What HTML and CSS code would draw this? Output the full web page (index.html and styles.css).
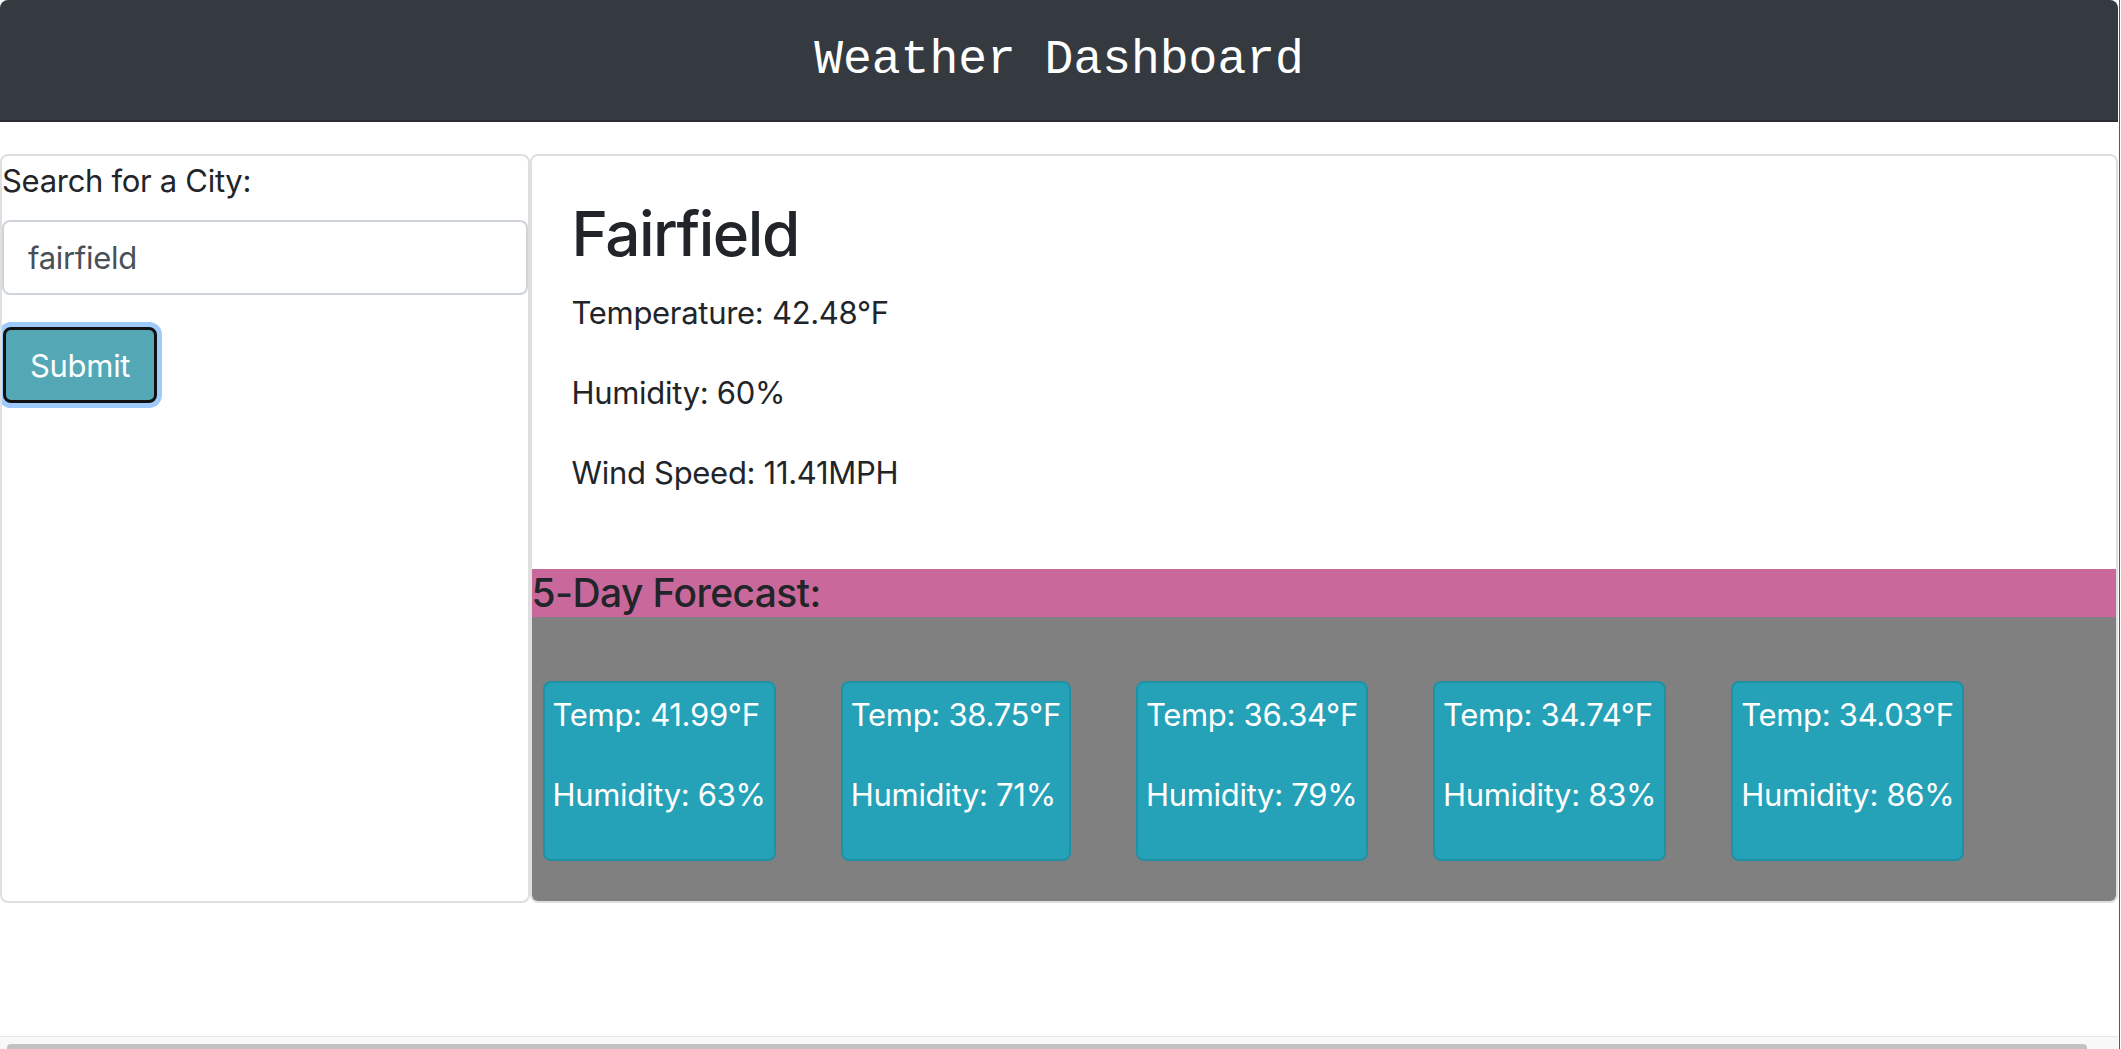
FILE: index.html
```html
<!DOCTYPE html>
<html lang="en">
<head>
<meta charset="utf-8">
<title>Weather Dashboard</title>
<link rel="stylesheet" href="styles.css">
</head>
<body>
<div class="window">
  <div class="viewport">
    <div class="page">
      <header class="topbar">
        <h1 class="title">Weather Dashboard</h1>
      </header>
      <main class="layout">
        <section class="card search">
          <label class="search-label" for="city">Search for a City:</label>
          <input class="search-input" id="city" type="text" value="fairfield">
          <button class="btn-submit" type="button">Submit</button>
        </section>
        <section class="card current">
          <div class="current-body">
            <h2 class="city">Fairfield</h2>
            <p class="stat">Temperature: 42.48°F</p>
            <p class="stat">Humidity: 60%</p>
            <p class="stat">Wind Speed: 11.41MPH</p>
          </div>
          <div class="forecast">
            <h5 class="forecast-title">5-Day Forecast:</h5>
            <div class="forecast-row">
              <div class="day"><p class="day-line">Temp: 41.99°F</p><p class="day-line">Humidity: 63%</p></div>
              <div class="day"><p class="day-line">Temp: 38.75°F</p><p class="day-line">Humidity: 71%</p></div>
              <div class="day"><p class="day-line">Temp: 36.34°F</p><p class="day-line">Humidity: 79%</p></div>
              <div class="day"><p class="day-line">Temp: 34.74°F</p><p class="day-line">Humidity: 83%</p></div>
              <div class="day"><p class="day-line">Temp: 34.03°F</p><p class="day-line">Humidity: 86%</p></div>
            </div>
          </div>
        </section>
      </main>
    </div>
    <div class="hscroll"><div class="hscroll-thumb"></div></div>
  </div>
  <div class="edge"></div>
</div>
</body>
</html>
```

FILE: styles.css
```css
* {
  box-sizing: border-box;
}

html, body {
  margin: 0;
  padding: 0;
  background: #ffffff;
}

body {
  font-family: Inter, "Liberation Sans", Arial, sans-serif;
  font-size: 31px;
  line-height: 48px;
  color: #212529;
  letter-spacing: -0.3px;
}

.window {
  display: flex;
  height: 1049px;
  overflow: hidden;
}

.viewport {
  width: 2118px;
  display: flex;
  flex-direction: column;
}

.page {
  flex: 1;
}

.edge {
  width: 1px;
  margin-left: 1px;
  background: #5a5a5a;
}

/* header */
.topbar {
  height: 122px;
  background: #343a40;
  border-bottom: 2px solid #2b2f34;
  border-radius: 8px 8px 0 0;
  display: flex;
  align-items: center;
  justify-content: center;
}

.title {
  margin: 0;
  font-family: "Liberation Mono", "Courier New", monospace;
  font-weight: 400;
  font-size: 48px;
  line-height: 56px;
  letter-spacing: 0;
  color: #ffffff;
}

/* layout */
.layout {
  margin-top: 32px;
  display: grid;
  grid-template-columns: 25% 75%;
}

.card {
  background: #ffffff;
  border: 2px solid #dfdfdf;
  border-radius: 8px;
  overflow: hidden;
}

/* search */
.search {
  display: flex;
  flex-direction: column;
  align-items: flex-start;
}

.search-label {
  display: block;
  margin: 1px 0 15px;
}

.search-input {
  display: block;
  width: 100%;
  height: 75px;
  padding: 0 24px;
  border: 2px solid #ced4da;
  border-radius: 8px;
  font-family: Inter, "Liberation Sans", Arial, sans-serif;
  font-size: 31px;
  letter-spacing: -0.3px;
  color: #495057;
  background: #ffffff;
  outline: none;
}

.btn-submit {
  margin: 32px 0 0 1px;
  height: 76px;
  padding: 0 24px;
  border: 3px solid #111111;
  border-radius: 8px;
  background: #54a8b6;
  color: #ffffff;
  font-family: Inter, "Liberation Sans", Arial, sans-serif;
  font-size: 31px;
  letter-spacing: -0.3px;
  box-shadow: 0 0 0 5px #9ecbfb;
  cursor: pointer;
}

/* current weather */
.current-body {
  padding: 40px;
}

.city {
  margin: 0 0 16px;
  font-size: 62px;
  line-height: 76.8px;
  font-weight: 500;
  letter-spacing: -1.5px;
}

.stat {
  margin: 0 0 32px;
}

/* forecast */
.forecast-title {
  margin: 0;
  background: #c9699b;
  font-size: 39px;
  line-height: 48px;
  font-weight: 500;
  letter-spacing: -0.6px;
  color: #212529;
}

.forecast-row {
  background: #808080;
  padding: 64px 11px 40px;
  display: flex;
  align-items: flex-start;
  gap: 65px;
}

.day {
  background: #25a2b8;
  border: 2px solid #1f91a4;
  border-radius: 8px;
  padding: 8px;
  color: #ffffff;
}

.day-line {
  margin: 0 0 32px;
  white-space: nowrap;
}

/* bottom scrollbar */
.hscroll {
  height: 13px;
  border-top: 1px solid #e6e6e6;
  background: #f8f8f8;
  padding: 7px 0 0 7px;
}

.hscroll-thumb {
  width: 2080px;
  height: 8px;
  background: #c1c1c1;
  border-radius: 4px 4px 0 0;
}
```
